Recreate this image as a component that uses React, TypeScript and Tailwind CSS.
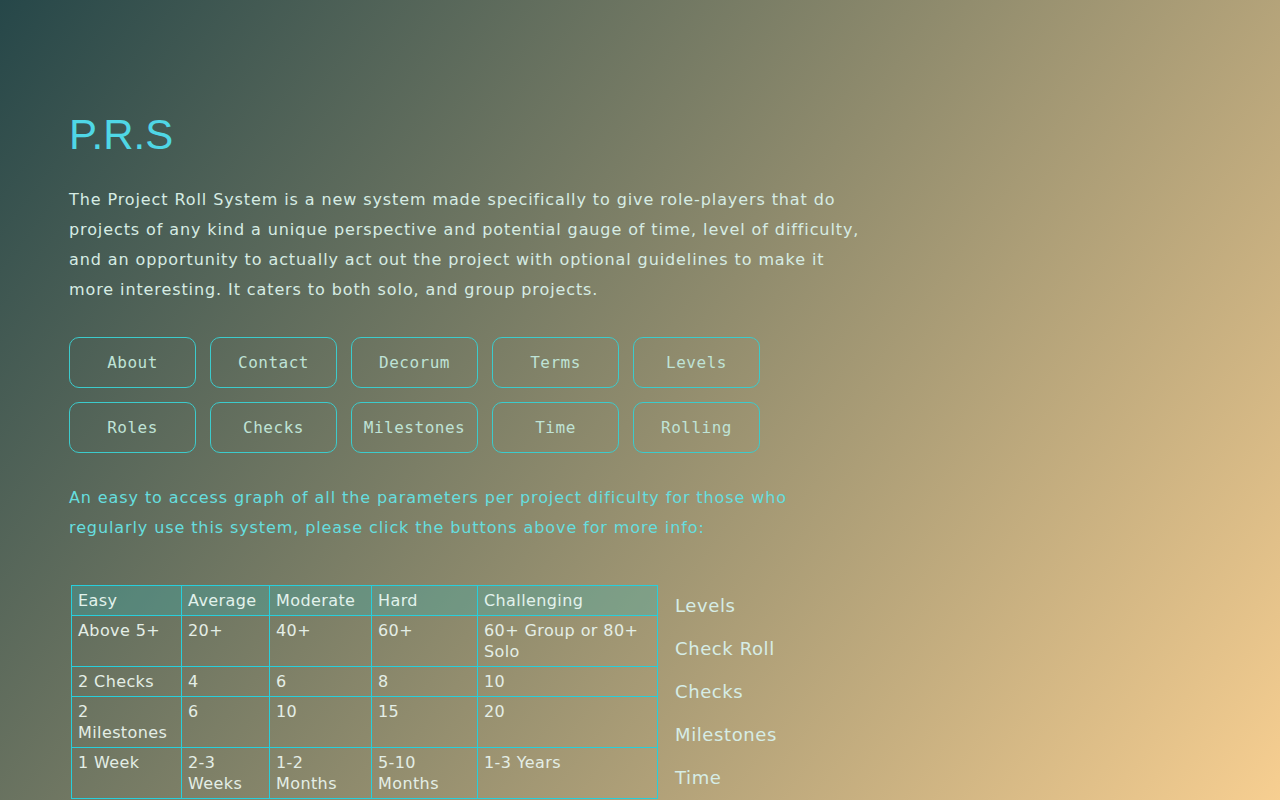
const navRows = [
  ['About', 'Contact', 'Decorum', 'Terms', 'Levels'],
  ['Roles', 'Checks', 'Milestones', 'Time', 'Rolling'],
];

const headers = ['Easy', 'Average', 'Moderate', 'Hard', 'Challenging'];

const rows = [
  ['Above 5+', '20+', '40+', '60+', '60+ Group or 80+ Solo'],
  ['2 Checks', '4', '6', '8', '10'],
  ['2 Milestones', '6', '10', '15', '20'],
  ['1 Week', '2-3 Weeks', '1-2 Months', '5-10 Months', '1-3 Years'],
];

const sideLinks = ['Levels', 'Check Roll', 'Checks', 'Milestones', 'Time'];

export default function App() {
  return (
    <div className="min-h-screen bg-[linear-gradient(127deg,#264749,#fbd192)] font-['DejaVu_Sans',sans-serif]">
      <main className="px-[69px] pt-[113px] pb-10">
        {/* Title */}
        <h1 className="font-['Liberation_Sans',Arial,sans-serif] text-[42px] leading-[44px] text-[#4fd7e6]">
          P.R.S
        </h1>

        <p className="mt-[28px] w-[800px] text-[16px] tracking-[0.9px] leading-[30px] text-[#d6ece4]">
          The Project Roll System is a new system made specifically to give role-players that do
          projects of any kind a unique perspective and potential gauge of time, level of difficulty,
          and an opportunity to actually act out the project with optional guidelines to make it
          more interesting. It caters to both solo, and group projects.
        </p>

        {/* Section buttons */}
        <div className="mt-[32px] flex flex-col gap-[14px]">
          {navRows.map((row, i) => (
            <div key={i} className="flex gap-[14px]">
              {row.map((label) => (
                <button
                  key={label}
                  className="w-[127px] h-[51px] rounded-[10px] border border-[#3ccbcc] font-['DejaVu_Sans_Mono',monospace] text-[16px] tracking-[0.5px] text-[#bfe3d6]"
                >
                  {label}
                </button>
              ))}
            </div>
          ))}
        </div>

        <p className="mt-[30px] w-[780px] text-[16px] tracking-[0.9px] leading-[30px] text-[#66dedf]">
          An easy to access graph of all the parameters per project dificulty for those who
          regularly use this system, please click the buttons above for more info:
        </p>

        <div className="mt-[42px] ml-[2px] flex items-start gap-[17px]">
          {/* Quick reference table */}
          <table className="w-[587px] table-fixed border-separate border-spacing-0 border-l border-t border-[#27cfdc] text-[16px] tracking-[0.4px] leading-[21px] text-[#e4eee6]">
            <colgroup>
              <col className="w-[110px]" />
              <col className="w-[88px]" />
              <col className="w-[102px]" />
              <col className="w-[106px]" />
              <col className="w-[180px]" />
            </colgroup>
            <thead>
              <tr className="bg-[#35b6b6]/30">
                {headers.map((h) => (
                  <th
                    key={h}
                    className="border-r border-b border-[#27cfdc] px-[6px] py-[4px] text-left font-normal text-[#e2f2ec]"
                  >
                    {h}
                  </th>
                ))}
              </tr>
            </thead>
            <tbody>
              {rows.map((row, i) => (
                <tr key={i}>
                  {row.map((cell, j) => (
                    <td key={j} className="border-r border-b border-[#27cfdc] px-[6px] pt-[4px] pb-[4px] align-top">
                      {cell}
                    </td>
                  ))}
                </tr>
              ))}
            </tbody>
          </table>

          <nav className="flex flex-col pt-[7px]">
            {sideLinks.map((link) => (
              <a key={link} href="#" className="h-[43px] text-[18px] tracking-[0.6px] leading-[28px] text-[#d6ede6]">
                {link}
              </a>
            ))}
          </nav>
        </div>
      </main>
    </div>
  );
}
